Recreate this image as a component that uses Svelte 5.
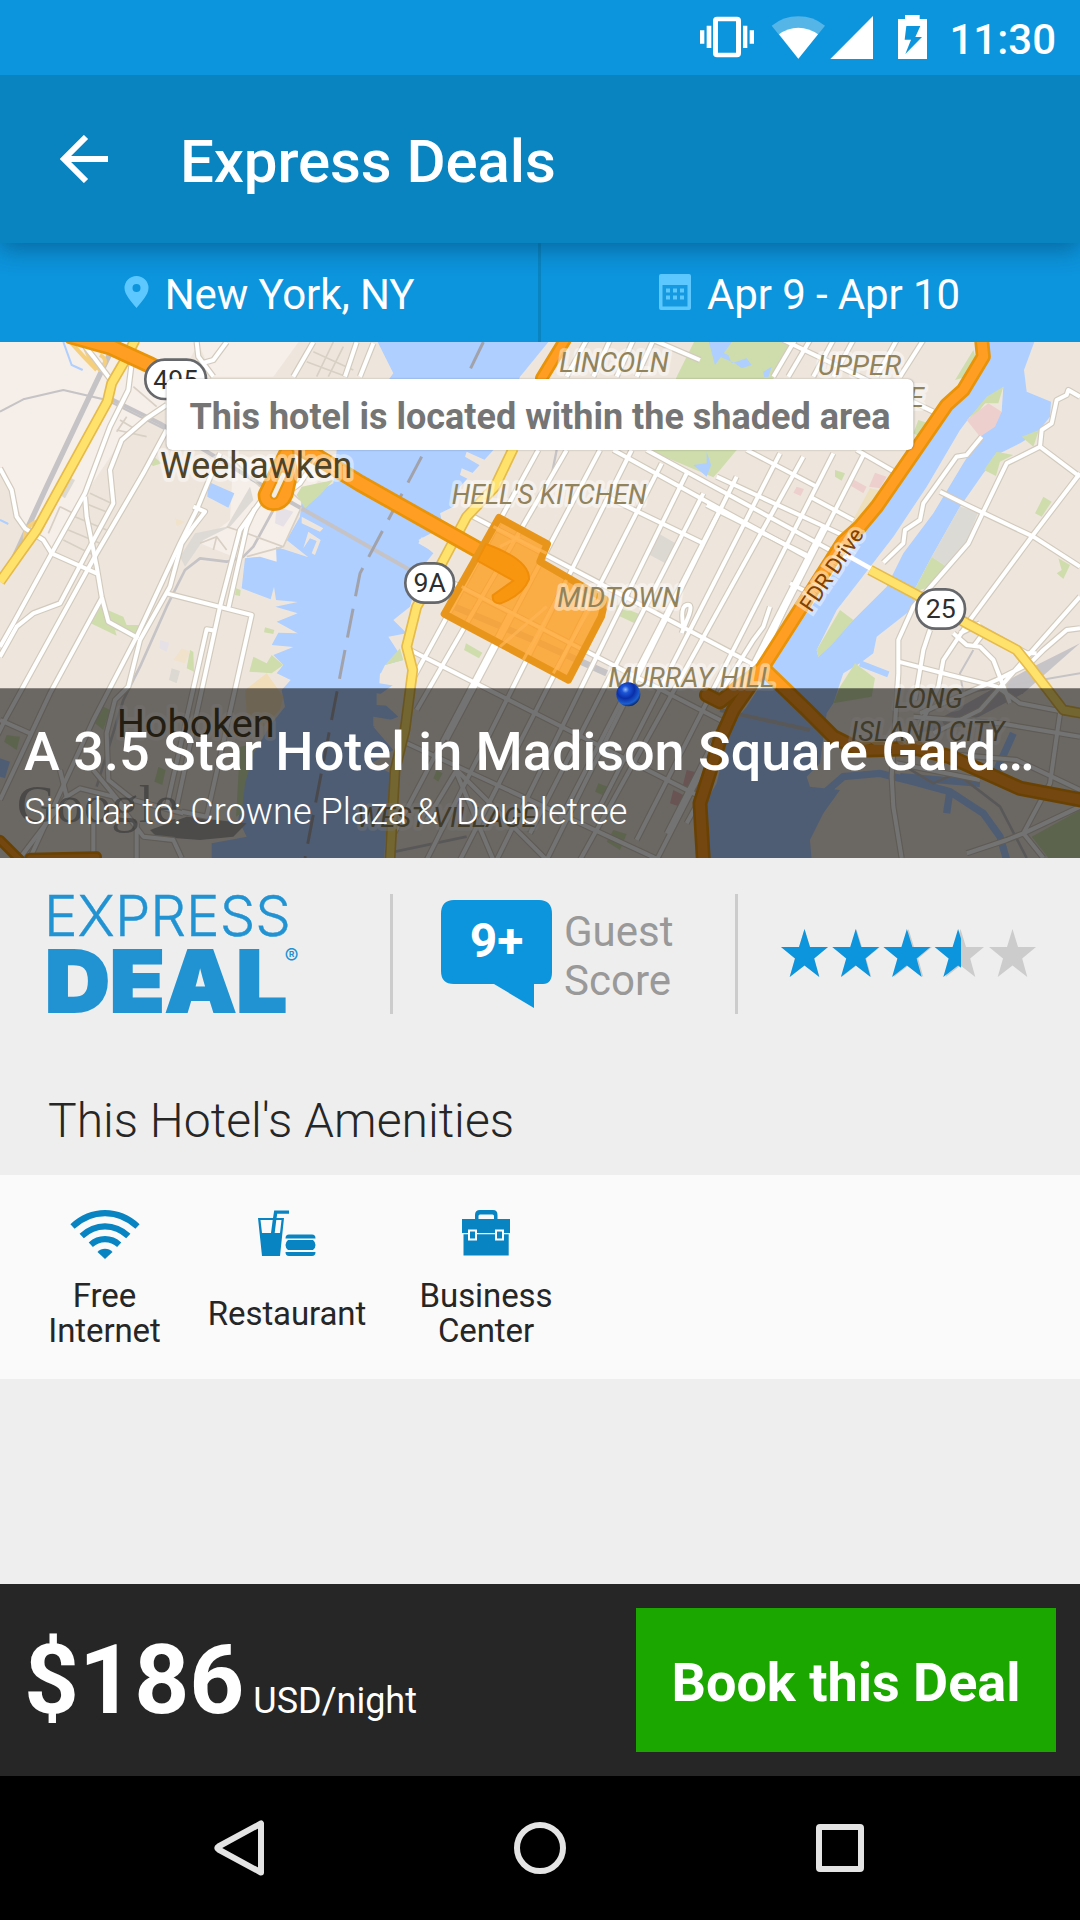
<script>
  const amenities = [
    { icon: 'wifi', label: 'Free\nInternet', width: 113 },
    { icon: 'food', label: 'Restaurant', width: 154 },
    { icon: 'briefcase', label: 'Business\nCenter', width: 146 }
  ];

  let rating = $state(3.5);
  const stars = [0, 1, 2, 3, 4];
  const starPath = 'M23.5 0L29 18H47L33.2 29.5L38.3 48L23.5 36.5L8.7 48L14 29.5L0 18H18Z';

  const water = [
    'M1130 0L1180 100L1010 330L1000 430L905 480L900 530L860 600L925 652L828 620L830 665L780 650L735 655L725 745L812 778L822 740L828 780L893 786L826 800L893 820L830 845L893 880L835 878L815 915L880 921L820 945L850 975L830 1000L872 1020L845 1050L855 1100L815 1150L760 1240L730 1330L715 1440L740 1490L635 1510V1560H1152L1172 1300L1115 1270L1180 1230L1120 1160L1195 1130L1130 1070L1200 1020L1140 1005L1155 975L1210 960L1165 890L1220 880L1180 840L1230 800L1260 690L1300 640L1255 600L1330 560L1320 520L1360 500L1380 440L1480 330L1560 110L1650 0Z',
    'M2960 0V50L2900 150L2860 180L2740 360L2640 510L2575 590L2500 700L2400 850L2310 990L2240 1100L2190 1160L2150 1330L2110 1400L2130 1560H2435L2430 1500L2470 1420L2520 1350L2430 1340L2420 1310L2460 1270L2480 1120L2500 1090L2530 1000L2580 970L2620 940L2630 890L2745 800L2740 755L2795 650L2880 500L2950 400L3000 340L3060 310L3110 280L3150 230L3153 185L3080 155L3072 90L3105 0Z',
    'M0 1255L30 1265L15 1315L0 1310Z',
    'M625 425L703 460L685 503L622 470Z'
  ];

  const island = 'M3010 140L3005 215L2945 285L2890 370L2800 520L2710 640L2660 740L2550 850L2455 950L2450 930L2510 810L2580 720L2680 590L2780 440L2880 270L2910 230Z';

  const parks = [
    'M2085 0H2380L2210 330L2160 390L2140 412L1950 332L2030 110Z',
    'M300 800L370 830L380 855L430 855L415 890L345 870L350 887L272 850Z',
    'M905 440L1000 420L960 465L915 505L890 465Z',
    'M450 340L485 370L460 378L445 370Z',
    'M760 950L800 970L815 945L850 975L815 1000L748 995Z',
    'M570 930L580 935L582 995L560 985Z',
    'M708 745L722 750L720 768L705 765Z',
    'M795 862L823 870L820 882L792 877Z',
    'M1398 910L1447 938L1437 955L1392 930Z',
    'M1155 975L1210 960L1200 925Z',
    'M1850 795L1925 825L1910 853L1845 822Z',
    'M2520 810L2560 840L2490 920L2455 950L2450 930Z',
    'M2795 650L2840 680L2795 740L2740 755Z',
    'M3010 140L2995 190L2955 190L2920 235L2910 230L2960 170Z',
    'M2990 335L3040 345L3000 365L2988 408L2952 390Z',
    'M3065 290L3117 270L3100 320Z',
    'M2865 120L2920 30L2930 60L2900 110Z',
    'M3130 470L3155 485L3125 530L3105 520Z',
    'M3175 655L3210 675L3190 717L3170 700L3185 690Z',
    'M2565 970L2625 1015L2615 1070L2500 1090L2520 1040Z',
    'M2505 390L2535 400L2525 422L2505 410Z',
    'M2755 240L2785 250L2765 295L2740 280Z',
    'M720 1220L770 1210L735 1330L725 1420L708 1430Z',
    'M300 1095L330 1110L310 1170L285 1150Z',
    'M475 1280L497 1290L487 1335L463 1325Z',
    'M20 1185L60 1190L50 1230L12 1205Z',
    'M1310 1290L1328 1300L1315 1325L1300 1315Z',
    'M1795 1330L1835 1345L1820 1370L1785 1355Z',
    'M1840 1470L1880 1482L1860 1530L1820 1505Z',
    'M3095 1490L3240 1410V1560H3150Z'
  ];

  // hospitals, campuses, depots
  const patches = [
    { d: 'M2965 190L3005 215L2985 260L2940 290L2900 240Z', fill: '#edd0ce' },
    { d: 'M2545 410L2600 440L2590 460L2548 435ZM2625 398L2660 410L2640 445L2607 440ZM2390 440L2412 447L2402 468L2380 458Z', fill: '#edd0ce' },
    { d: 'M2060 1290L2100 1300L2085 1370L2045 1350ZM2020 1350L2050 1365L2040 1400L2010 1390Z', fill: '#e8b9b8' },
    { d: 'M1975 580L2035 615L2000 672L1940 640Z', fill: '#dcd9d3' },
    { d: 'M2880 500L2935 515L2895 620L2840 680L2795 650Z', fill: '#dcdad4' },
    { d: 'M2610 445L2655 455L2600 540L2550 555Z', fill: '#eedfbd' },
    { d: 'M750 440L760 480L690 560L610 600L555 680L540 650L585 580L680 560Z', fill: '#dddad5' },
    { d: 'M480 900L508 908L500 935L478 925ZM830 500L880 515L850 560L825 550Z', fill: '#e6e1e6' },
    { d: 'M800 1000L850 1070L840 1110L790 1160L740 1120L735 1050Z', fill: '#f2deb9' },
    { d: 'M545 925L570 935L555 970L520 960ZM525 535L555 545L530 560Z', fill: '#f1e2cc' },
    { d: 'M515 985L540 993L530 1030L507 1020ZM205 410L225 420L195 475L180 465Z', fill: '#dcd9d3' },
    { d: 'M450 1470L560 1430L740 1450L700 1490L600 1500L470 1490Z', fill: '#a9a6a4' },
    { d: 'M3240 910L3070 1060L2880 1160L2740 1180L3080 990Z', fill: '#c7c4c7' }
  ];

  const rails = [
    { d: 'M330 40L230 250L140 440L20 700', w: 16 },
    { d: 'M0 215L70 178L190 150L320 180L500 270', w: 6 },
    { d: 'M320 170L480 250L860 480L1230 690', w: 12 },
    { d: 'M820 510L760 620L730 650L680 665L600 655L555 690L500 800L420 980L370 1080L290 1340', w: 8 },
    { d: 'M1670 330L1650 430L1590 520L1540 600', w: 7 },
    { d: 'M1340 790L1600 900L1820 1000', w: 20 },
    { d: 'M2160 1110L2430 1170', w: 12 },
    { d: 'M2920 930L2880 1000L2890 1060L3240 1000', w: 6 },
    { d: 'M2700 1270L2800 1330L2870 1300L3000 1400L3080 1554', w: 8 },
    { d: 'M1160 1540L1400 1490', w: 8 }
  ];

  const lanes = [
    'M270 460L345 495M255 490L330 520M225 530L320 570M205 570L300 610M190 600L280 645M180 500L145 580M180 500L230 525',
    'M400 140L470 200M360 240L410 270M350 270L440 290M380 230L350 275',
    'M940 35L1060 90M920 65L1040 110M1000 6L950 110M1030 20L985 110',
    'M740 650L850 620L905 500M680 560L740 580L850 620M600 610L650 590L680 630M650 590L640 630',
    'M850 435L900 480M690 350L780 440'
  ];

  const roads = [
    'M0 385L35 450L50 530L75 565L130 600L155 640L290 700',
    'M395 70L385 150L330 260L255 460L155 640L40 850L0 920',
    'M255 470L260 530L290 680L305 770L325 845L415 895',
    'M500 195L440 235L365 300L330 390L340 490L270 620L180 790L100 820L50 860L0 950',
    'M500 270L430 400L290 640L20 1130L-20 1210',
    'M305 775L150 1060L0 1380',
    'M660 340L590 510L540 610L410 890L280 1140L90 1554',
    'M580 500L615 515L580 560L545 610L510 740L420 900L385 1040L345 1080L320 1180L325 1320L400 1380L550 1420',
    'M500 760L755 825L620 1430L545 1415',
    'M785 480L720 570L660 800L590 1120L530 1400',
    'M765 505L740 560L685 805',
    'M645 872L620 868L500 1400',
    'M590 6L595 50L640 110M680 6L640 60L605 70M245 6L280 50L340 130',
    'M940 6L880 110M1070 6L1035 110M1120 10L1080 110',
    'M0 1140L90 1180M180 1290L200 1370L60 1554M200 1370L240 1345L340 1370L430 1490L520 1500L545 1554M280 1290L370 1400M280 1450V1554M410 1450V1554',
    'M860 460L900 430L920 400M820 460L850 400'
  ];

  const queens = [
    'M2650 668L2710 610L2715 570L2760 540L2770 490L2870 350L2900 345L2945 290',
    'M2820 455L2900 495L3100 590L3240 680',
    'M3240 170L3205 150L3200 165L3170 180L3155 250L3125 270L3120 320L3240 410',
    'M3120 320L3020 370L2950 515L2905 610L2740 800L2695 900V1000L2675 1310L2680 1400L2705 1554',
    'M3240 400L3095 590L2910 840L2830 960L2815 1040L2760 1160',
    'M3240 770L2940 1110L2800 1180M3240 865L3200 870L3130 930L3090 970L2990 1020L2760 1120',
    'M2695 965L2850 1005L2990 1040L3060 1090L3240 1125',
    'M2790 870L2770 930L2745 1080M2860 880L2900 915L2940 920L2980 960L3030 1090',
    'M2900 840L3080 940L3110 940M2880 880L2940 850M2920 920L2950 880',
    'M3180 1120L3150 1330L3070 1480L3020 1500L2900 1540M3070 1480L3130 1554M3240 1400L3070 1480',
    'M2740 1130L3000 1150L3240 1190M2700 1230L3050 1260L3240 1350M2690 1270L2940 1320'
  ];

  // street grid, dense run of avenues then the wider cross streets
  const avenues = [
    [1530, 820, 1140, 1560], [1700, 330, 1250, 1110], [1615, 330, 1130, 1215],
    [1800, 330, 1340, 1200], [1895, 330, 1280, 1560], [1985, 370, 1380, 1560],
    [2060, 400, 1490, 1560], [2110, 460, 1590, 1480], [2160, 510, 1680, 1440],
    [2210, 410, 1640, 1560], [2340, 340, 1800, 1400], [2410, 350, 1740, 1560],
    [2500, 340, 1910, 1500], [2590, 345, 1970, 1560], [2470, 560, 2000, 1480],
    [2530, 590, 2060, 1450], [2440, 620, 2130, 1290], [1760, 0, 1700, 110],
    [1830, 0, 1780, 110], [1900, 0, 1850, 110], [1960, 0, 1910, 110],
    [2385, 0, 2320, 110], [2430, 0, 2365, 110], [2500, 0, 2440, 110],
    [2560, 0, 2500, 110], [2690, 0, 2630, 110], [2770, 0, 2700, 110]
  ];

  const streets = [
    [1420, 530, 2340, 1015], [1230, 930, 2160, 1400], [1360, 730, 2200, 1160],
    [1840, 330, 2420, 650], [1940, 330, 2600, 690], [2240, 330, 2450, 440],
    [2150, 410, 2560, 600], [2430, 470, 2560, 540], [2570, 330, 2700, 405],
    [1200, 1200, 2000, 1570], [2370, 730, 2450, 770], [1960, 0, 2100, 60],
    [2350, 0, 2800, 215], [1820, 470, 2110, 610], [2120, 495, 2420, 645]
  ];

  const arterials = [
    'M405 0L370 70L335 130L322 185L110 570L60 640L0 725',
    'M1540 325L1485 440L1400 530L1320 680L1250 800L1220 920L1238 990L1215 1170L1185 1290L1170 1560',
    'M2610 690L2760 770L2900 850L3050 930L3090 980L3190 1110L3245 1120'
  ];

  const highways = [
    { d: 'M215 -12L330 20L450 75L700 210L950 350L1080 430L1400 610L1480 655', w: 44 },
    { d: 'M860 350L870 400L856 462Q845 488 820 488Q797 486 798 464L835 390L860 340', w: 42 },
    { d: 'M1695 0L1625 115', w: 32 },
    { d: 'M2945 0L2950 50L2890 150L2840 195L2720 370L2630 500L2580 560L2530 605L2290 980L2200 1110L2160 1200L2100 1390L2110 1560', w: 37 },
    { d: 'M2120 1065L2160 1085L2230 1030L2290 985L2420 1110L2500 1190L2580 1230L2750 1225L2850 1250L3060 1345L3245 1380', w: 38 },
    { d: 'M0 1500L60 1560M90 1554L290 1550', w: 24 }
  ];

  const labels = [
    { text: 'LINCOLN', x: 1678, y: 96, length: 328, area: true },
    { text: 'UPPER', x: 2453, y: 104, length: 250, area: true },
    { text: 'EAST SIDE', x: 2400, y: 200, length: 372, area: true },
    { text: "HELL'S KITCHEN", x: 1355, y: 493, length: 585, area: true },
    { text: 'MIDTOWN', x: 1672, y: 800, length: 370, area: true },
    { text: 'MURRAY HILL', x: 1825, y: 1042, length: 498, area: true },
    { text: 'LONG', x: 2683, y: 1105, length: 205, area: true },
    { text: 'ISLAND CITY', x: 2553, y: 1202, length: 460, area: true },
    { text: 'WEST VILLAGE', x: 1070, y: 1460, length: 540, area: true },
    { text: 'Weehawken', x: 480, y: 415, length: 577, size: 108 },
    { text: 'Hoboken', x: 350, y: 1191, length: 474, size: 118 }
  ];

  const shields = [
    { text: '495', x: 527, y: 118, w: 182 },
    { text: '9A', x: 1289, y: 729, w: 146 },
    { text: '25', x: 2822, y: 807, w: 146 }
  ];
</script>

<svelte:head>
  <title>Express Deals</title>
</svelte:head>

<div class="screen">
  <div class="status-bar">
    <svg class="status-icons" viewBox="60 0 690 225" aria-hidden="true">
      <g fill="#fff">
        <path d="M63 91h13v40H63zM83 77h14v67H83zM192 77h13v67h-13zM212 91h13v40h-13z" />
        <path fill-rule="evenodd" d="M114 50h60q12 0 12 12v98q0 12-12 12h-60q-12 0-12-12V62q0-12 12-12zM117 64v94h54V64z" />
        <path opacity=".3" d="M358 176L278 77Q313 49 358 49T438 77Z" />
        <path d="M358 176L300 103Q326 83 358 83T417 103Z" />
        <path d="M582 48V177H454Z" />
        <path fill-rule="evenodd" d="M678 45h44v12h22v120h-87V57h21zM682 78L677 119H696L679 162L729 111H709L724 78Z" />
      </g>
    </svg>
    <span class="clock">11:30</span>
  </div>

  <header class="toolbar">
    <svg class="back" viewBox="0 0 48 48" aria-label="Back">
      <path d="M26 2L4 24L26 46M5 24H48" fill="none" stroke="#fff" stroke-width="6" />
    </svg>
    <h1>Express Deals</h1>
  </header>

  <div class="search-bar">
    <div class="search-item">
      <svg class="pin" viewBox="0 0 24 32" aria-hidden="true">
        <path fill="#5cc8ff" fill-rule="evenodd" d="M12 0a12 12 0 0 1 12 12c0 7-8 15-12 20C8 27 0 19 0 12A12 12 0 0 1 12 0zm0 8a4 4 0 1 0 0 8 4 4 0 0 0 0-8z" />
      </svg>
      <span>New York, NY</span>
    </div>
    <div class="search-item dates">
      <svg class="calendar" viewBox="0 0 32 36" aria-hidden="true">
        <rect width="32" height="36" rx="2" fill="#5cc8ff" />
        <rect x="3.5" y="11" width="25" height="21.5" fill="#1599e0" />
        <path fill="#5cc8ff" d="M7 14.500h4v4H7zM14 14.500h4v4h-4zM21 14.500h4v4h-4zM7 21.500h4v4H7zM14 21.500h4v4h-4zM21 21.500h4v4h-4z" />
      </svg>
      <span>Apr 9 - Apr 10</span>
    </div>
  </div>

  <section class="map">
    <svg class="map-canvas" viewBox="0 6 3240 1548" preserveAspectRatio="none">
      <defs>
        <clipPath id="manhattan">
          <path d="M1640 0H2970V50L2860 190L2640 510L2400 850L2300 990L2190 1150L2110 1400V1560H1170L1185 1290L1215 1170L1240 990L1225 920L1255 800L1320 680L1400 530L1485 440L1540 325Z" />
        </clipPath>
        <radialGradient id="ball" cx=".38" cy=".3" r=".75">
          <stop offset="0" stop-color="#8fb8f5" />
          <stop offset=".2" stop-color="#1c55d8" />
          <stop offset=".5" stop-color="#0a2fa8" />
          <stop offset=".8" stop-color="#1b5fd0" />
          <stop offset="1" stop-color="#061a4d" />
        </radialGradient>
      </defs>

      <rect width="3240" height="1560" fill="#eee6dd" />
      <path fill="#f6eee8" d="M0 0H600L500 190L365 300L250 470L155 640L75 565L35 450L0 400Z" />
      <path fill="#f6eee8" d="M590 0H900L820 110H640ZM700 350H1000L905 500L830 665L700 650L600 610L690 540Z" />
      {#each water as d}
        <path {d} fill="#aecfff" />
      {/each}
      <path fill="none" stroke="#aecfff" stroke-width="22" d="M2460 1370L2530 1310L2640 1300L2740 1325L2850 1355L2950 1420L3000 1490L3020 1560M2850 1350L2840 1420M2700 1310L2940 1330M3040 1180L2990 1290" />
      <path fill="none" stroke="#aecfff" stroke-width="6" d="M190 6L215 75L248 90M0 540L25 552" />
      <path fill="none" stroke="#aecfff" stroke-width="18" d="M2580 970L2665 1003" />
      <path d={island} fill="#eee6dd" />
      <!-- piers -->
      <path fill="#eee6dd" d="M1400 335L1500 380L1490 405L1395 350ZM1385 385L1480 425L1470 450L1380 405ZM1265 592L1340 625L1325 650L1255 610ZM1140 1000L1230 1020V1045L1138 1030ZM1130 1060L1220 1075V1100L1130 1095ZM1120 1130L1210 1145V1165L1120 1158ZM905 530L970 565L960 575L905 550ZM925 575L962 600L945 645L935 640L950 603L930 595L910 625Z" />
      {#each parks as d}
        <path {d} fill="#cfddad" />
      {/each}
      <path fill="#aecfff" d="M2160 35L2185 45L2195 70L2240 55L2255 75L2225 85L2205 70L2160 50ZM2290 95L2315 80L2305 112L2292 110ZM2080 375L2120 370V335L2133 375L2120 410ZM2125 0H2200L2145 75Z" />
      {#each patches as patch}
        <path d={patch.d} fill={patch.fill} />
      {/each}

      <g fill="none" stroke-linejoin="round">
        {#each rails as rail}
          <path d={rail.d} stroke="#c5c3c6" stroke-width={rail.w} />
        {/each}
        {#each lanes as d}
          <path {d} stroke="#d8d0c4" stroke-width="5" />
        {/each}
        <path d="M250 0Q260 60 300 90Q330 60 300 45M215 10Q250 50 290 90M75 600Q70 560 110 545" stroke="#f5cf7c" stroke-width="12" />
        {#each [{ color: '#d2cabd', w: 19 }, { color: '#fff', w: 12 }] as pass}
          <g stroke={pass.color} stroke-width={pass.w}>
            {#each [...roads, ...queens] as d}
              <path {d} />
            {/each}
            <g clip-path="url(#manhattan)">
              {#each [...avenues, ...streets] as [x1, y1, x2, y2]}
                <line {x1} {y1} {x2} {y2} />
              {/each}
              <path d="M2310 800L2290 860L2260 900L2160 1060M2050 860Q2040 800 2060 795Q2080 790 2065 830L2045 880" />
              <path d="M1370 1290L1530 1450L1640 1560M1370 1290L1280 1440M1370 1300L1480 1560" />
            </g>
          </g>
        {/each}
        <path d="M2540 645L2620 690" stroke="#fff" stroke-width="14" />
        <path d="M1450 6L1395 120M1265 350L1080 700L1035 930L915 1554" stroke="#a2a2ab" stroke-width="9" stroke-dasharray="88 38" />

        {#each arterials as d}
          <path {d} stroke="#e5bb4b" stroke-width="33" />
          <path {d} stroke="#ffe26c" stroke-width="23" />
        {/each}
        {#each highways as road}
          <path d={road.d} stroke="#e89308" stroke-width={road.w + 8} stroke-linecap="round" />
        {/each}
        {#each highways as road}
          <path d={road.d} stroke="#ff9e22" stroke-width={road.w - 8} stroke-linecap="round" />
        {/each}
        <path d="M822 466L850 405" stroke="#e89308" stroke-width="26" stroke-linecap="round" />
        <path d="M822 466L850 405" stroke="#f3ece2" stroke-width="14" stroke-linecap="round" />
      </g>

      <path d="M1497 533L1642 612L1620 665L1816 778L1804 830L1705 1020L1333 822Z" fill="#ff9c1a" fill-opacity=".78" stroke="#e8961b" stroke-width="22" stroke-linejoin="round" />
      <g fill="none" stroke="#ffb554" stroke-width="9" opacity=".75">
        <path d="M1480 560L1640 640M1385 740L1740 925M1700 720L1570 960M1780 790L1660 1000M1640 800L1500 920M1500 620L1560 590" />
      </g>
      <path d="M1458 612Q1590 660 1587 718Q1568 765 1502 790Q1476 792 1478 766L1540 722L1432 662Z" fill="#f9960f" stroke="#f08e0a" stroke-width="6" stroke-linejoin="round" />

      {#each labels as label}
        <text
          class:area={label.area}
          class="place"
          x={label.x}
          y={label.y}
          textLength={label.length}
          lengthAdjust="spacingAndGlyphs"
          font-size={label.size ?? 83}>{label.text}</text>
      {/each}
      <text class="drive" transform="translate(2434 820) rotate(-56)" textLength="286" lengthAdjust="spacingAndGlyphs">FDR Drive</text>

      {#each shields as shield}
        <rect x={shield.x - shield.w / 2} y={shield.y - 59} width={shield.w} height="118" rx="58" fill="#fff" stroke="#66676a" stroke-width="8" />
        <text class="route" x={shield.x} y={shield.y + 28} text-anchor="middle">{shield.text}</text>
      {/each}
      <text class="google" x="50" y="1445" textLength="485" lengthAdjust="spacingAndGlyphs">Google</text>
      <path fill="#000" fill-opacity=".55" d="M0 1045H3240V1560H0Z" />
      <circle cx="1885" cy="1063" r="36" fill="url(#ball)" />
    </svg>

    <div class="notice">This hotel is located within the shaded area</div>
    <div class="hotel">
      <h2>A 3.5 Star Hotel in Madison Square Gard…</h2>
      <p>Similar to: Crowne Plaza &amp;&nbsp; Doubletree</p>
    </div>
  </section>

  <section class="summary">
    <div class="brand">
      <svg viewBox="0 0 256 120" aria-label="Express Deal">
        <text class="brand-express" x="-4" y="41.500" textLength="247" lengthAdjust="spacingAndGlyphs">EXPRESS</text>
        <text class="brand-deal" x="-3" y="117.500" textLength="242" lengthAdjust="spacingAndGlyphs">DEAL</text>
        <text class="brand-mark" x="236.500" y="70">®</text>
      </svg>
    </div>
    <div class="score">
      <div class="bubble">
        <svg viewBox="0 0 111 108" aria-hidden="true">
          <path fill="#0c94dc" d="M13 0H98Q111 0 111 14V72Q111 84 102 84H93V108L53 84H13Q0 84 0 71V14Q0 0 13 0Z" />
        </svg>
        <span>9+</span>
      </div>
      <div class="score-label">Guest<br />Score</div>
    </div>
    <div class="rating">
      <svg viewBox="0 0 256 48" aria-label="{rating} stars">
        <defs>
          <clipPath id="filled">
            <rect width={rating * 51.4} height="48" />
          </clipPath>
        </defs>
        {#each stars as i}
          <path d={starPath} fill="#ccc" transform="translate({i * 52} 0)" />
        {/each}
        <g clip-path="url(#filled)">
          {#each stars as i}
            <path d={starPath} fill="#0c94dc" transform="translate({i * 51.2} 0)" />
          {/each}
        </g>
      </svg>
    </div>
  </section>

  <h3 class="section-title">This Hotel's Amenities</h3>
  <ul class="amenities">
    {#each amenities as amenity}
      <li style:width="{amenity.width}px">
        {#if amenity.icon === 'wifi'}
          <svg width="70" height="49" viewBox="0 0 70 49" aria-hidden="true">
            <g fill="none" stroke="#0884c2" stroke-width="6.200">
              <path d="M2.500 16.500Q17 3.200 35 3.200T67.500 16.500" />
              <path d="M11.700 26Q22 16.300 35 16.300T58.300 26" />
              <path d="M20.800 34.800Q27 29.200 35 29.200T49.200 34.800" />
            </g>
            <path fill="#0884c2" d="M35 49L27.500 42Q30.500 38.700 35 38.700T42.500 42Z" />
          </svg>
        {:else if amenity.icon === 'food'}
          <svg width="58" height="46" viewBox="0 0 58 46" aria-hidden="true">
            <path fill="#0884c2" fill-rule="evenodd" d="M0 8H15L16.200 .5H31V3.800H19.200L18.600 8H26L22 46H4ZM2.500 10L4 23H13L14.700 10ZM18.300 10L16.700 23H22L23.500 10Z" />
            <path fill="#0884c2" d="M27.500 28.500Q27.500 24.500 31 24.500H54Q57.500 24.500 57.500 28.500ZM30 30H55Q57.500 32 57.500 35T55 40H30Q27.500 38 27.500 35T30 30ZM27.500 42H57.500Q57.500 46 54 46H31Q27.500 46 27.500 42Z" />
          </svg>
        {:else}
          <svg width="48" height="46" viewBox="0 0 48 46" aria-hidden="true">
            <path fill="#0884c2" d="M0 9H13V5Q13 0 18 0H31Q35.500 0 35.500 5V9H48V23H0ZM16.500 9H32V6Q32 4.500 30.500 4.500H18Q16.500 4.500 16.500 6Z" fill-rule="evenodd" />
            <path fill="#0884c2" d="M1.500 24.300H46.700V45.500H1.500Z" />
            <path fill="#0884c2" stroke="#fff" stroke-width="2" d="M7 20.500H14V29.500H7ZM34 20.500H41V29.500H34Z" />
          </svg>
        {/if}
        <span>{amenity.label}</span>
      </li>
    {/each}
  </ul>

  <div class="spacer"></div>

  <footer class="booking">
    <div class="price">
      <strong>$186</strong>
      <span>USD/night</span>
    </div>
    <button>Book this Deal</button>
  </footer>

  <nav class="nav-bar">
    <svg viewBox="0 0 60 60"><path d="M51 5.500V54.500L8.500 31.500Q6 30 8.500 28.500Z" /></svg>
    <svg viewBox="0 0 60 60"><circle cx="30" cy="30" r="23" /></svg>
    <svg viewBox="0 0 60 60"><rect x="9" y="9" width="42" height="42" rx="1" /></svg>
  </nav>
</div>

<style>
  :global(body) {
    margin: 0;
    background: #eee;
  }

  .screen {
    display: flex;
    flex-direction: column;
    width: 1080px;
    height: 1920px;
    overflow: hidden;
    background: #eee;
    color: #262626;
    font-family: Roboto, "Liberation Sans", sans-serif;
  }

  h1, h2, h3, p, ul {
    margin: 0;
    padding: 0;
  }

  .status-bar {
    position: relative;
    z-index: 2;
    display: flex;
    align-items: center;
    justify-content: flex-end;
    gap: 20px;
    flex: none;
    height: 75px;
    padding-right: 24px;
    background: #0c95dd;
    color: #fff;
  }

  .status-icons {
    width: 230px;
    height: 75px;
  }

  .clock {
    padding-top: 3px;
    font-size: 42px;
    font-weight: 500;
  }

  .toolbar {
    position: relative;
    display: flex;
    align-items: center;
    gap: 72px;
    flex: none;
    height: 168px;
    padding-left: 60px;
    background: #0a84c1;
    box-shadow: 0 6px 22px rgba(0, 50, 80, 0.45);
    color: #fff;
  }

  .back {
    width: 48px;
    height: 48px;
  }

  h1 {
    padding-top: 4px;
    font-size: 60px;
    font-weight: 500;
    letter-spacing: -0.1px;
  }

  .search-bar {
    display: grid;
    grid-template-columns: 538px 542px;
    flex: none;
    height: 99px;
    background: #0c94dc;
    color: #fff;
    font-size: 42px;
    letter-spacing: -0.1px;
  }

  .search-item {
    display: flex;
    align-items: center;
    justify-content: center;
    gap: 16px;
    padding-top: 3px;
  }

  .dates {
    padding-right: 2px;
    border-left: 3px solid #0a84c1;
  }

  .pin {
    width: 25px;
    height: 32px;
    margin-top: -5px;
  }

  .calendar {
    width: 32px;
    height: 36px;
    margin-top: -4px;
  }

  .map {
    position: relative;
    flex: none;
    height: 516px;
    overflow: hidden;
  }

  .map-canvas {
    display: block;
    width: 1080px;
    height: 516px;
  }

  .place {
    fill: #4e4327;
    stroke: #fff;
    stroke-opacity: 0.45;
    stroke-width: 22px;
    stroke-linejoin: round;
    paint-order: stroke;
  }

  .area {
    fill: #91835c;
    font-style: italic;
  }

  .drive {
    fill: #824100;
    stroke: #fff;
    stroke-opacity: 0.45;
    stroke-width: 20px;
    paint-order: stroke;
    font-size: 66px;
  }

  .route {
    fill: #2d2e30;
    font-size: 80px;
  }

  .google {
    fill: #777;
    fill-opacity: 0.6;
    font-family: "Liberation Serif", serif;
    font-size: 160px;
  }

  .notice {
    position: absolute;
    top: 37px;
    left: 50%;
    transform: translateX(-50%);
    box-sizing: border-box;
    height: 71px;
    padding: 2px 23px 0;
    border-radius: 6px;
    background: #fff;
    box-shadow: 0 0 2px rgba(0, 0, 0, 0.3);
    color: #757575;
    font-size: 36px;
    font-weight: 700;
    line-height: 72px;
    white-space: nowrap;
  }

  .hotel {
    position: absolute;
    right: 0;
    bottom: 0;
    left: 0;
    height: 138px;
    padding: 32px 24px 0;
    color: #fff;
  }

  h2 {
    font-size: 54px;
    font-weight: 500;
    line-height: 63px;
    white-space: nowrap;
  }

  .hotel p {
    margin-top: 3px;
    font-size: 36px;
    font-weight: 300;
    letter-spacing: 0.07px;
    line-height: 52px;
  }

  .summary {
    display: grid;
    grid-template-columns: 390px 345px 345px;
    flex: none;
    padding: 36px 0;
  }

  .summary > div {
    box-sizing: border-box;
    height: 120px;
  }

  .brand {
    padding-left: 48px;
  }

  .brand svg {
    width: 256px;
    height: 120px;
    overflow: visible;
  }

  .brand text {
    fill: #2193d3;
    font-family: Inter, "Liberation Sans", sans-serif;
  }

  .brand-express {
    font-size: 56px;
    font-weight: 300;
    stroke: #2193d3;
    stroke-width: 0.4px;
  }

  .brand-deal {
    font-size: 85px;
    font-weight: 900;
    stroke: #2193d3;
    stroke-width: 2px;
  }

  .brand-mark {
    font-size: 21px;
  }

  .score {
    display: flex;
    gap: 12px;
    padding: 6px 0 0 48px;
    border-left: 3px solid #ccc;
  }

  .bubble {
    position: relative;
    width: 111px;
    height: 108px;
  }

  .bubble svg {
    display: block;
  }

  .bubble span {
    position: absolute;
    top: 12px;
    left: 0;
    width: 111px;
    color: #fff;
    font-size: 48px;
    font-weight: 700;
    text-align: center;
  }

  .score-label {
    padding-top: 7px;
    color: #999;
    font-size: 42px;
    line-height: 49px;
  }

  .rating {
    padding: 35px 0 0 43px;
    border-left: 3px solid #ccc;
  }

  .rating svg {
    display: block;
    width: 256px;
    height: 48px;
  }

  .section-title {
    flex: none;
    height: 125px;
    padding-left: 48px;
    font-size: 48px;
    font-weight: 300;
    line-height: 142px;
  }

  .amenities {
    display: flex;
    align-items: flex-start;
    gap: 49px;
    flex: none;
    box-sizing: border-box;
    height: 204px;
    padding: 35px 48px 0;
    background: #fafafa;
    list-style: none;
  }

  .amenities li {
    display: flex;
    flex-direction: column;
    align-items: center;
    height: 138px;
  }

  .amenities svg {
    flex: none;
    margin-bottom: auto;
  }

  .amenities span {
    display: flex;
    align-items: center;
    height: 70px;
    font-size: 33px;
    letter-spacing: -0.1px;
    line-height: 35px;
    text-align: center;
    white-space: pre-line;
  }

  .spacer {
    flex: 1;
  }

  .booking {
    display: flex;
    align-items: center;
    justify-content: space-between;
    flex: none;
    height: 192px;
    padding: 0 24px;
    background: #262626;
    color: #fff;
  }

  .price {
    display: flex;
    align-items: baseline;
    gap: 9px;
    font-size: 36px;
  }

  .price strong {
    font-size: 96px;
    font-weight: 700;
  }

  button {
    width: 420px;
    height: 144px;
    padding: 4px 0 0;
    border: 0;
    background: #1ba600;
    color: #fff;
    font: 700 54px Roboto, "Liberation Sans", sans-serif;
  }

  .nav-bar {
    display: flex;
    align-items: center;
    justify-content: center;
    gap: 240px;
    flex: none;
    height: 144px;
    background: #000;
  }

  .nav-bar svg {
    width: 60px;
    height: 60px;
    fill: none;
    stroke: #e4e4e4;
    stroke-width: 6px;
    stroke-linejoin: round;
  }
</style>
